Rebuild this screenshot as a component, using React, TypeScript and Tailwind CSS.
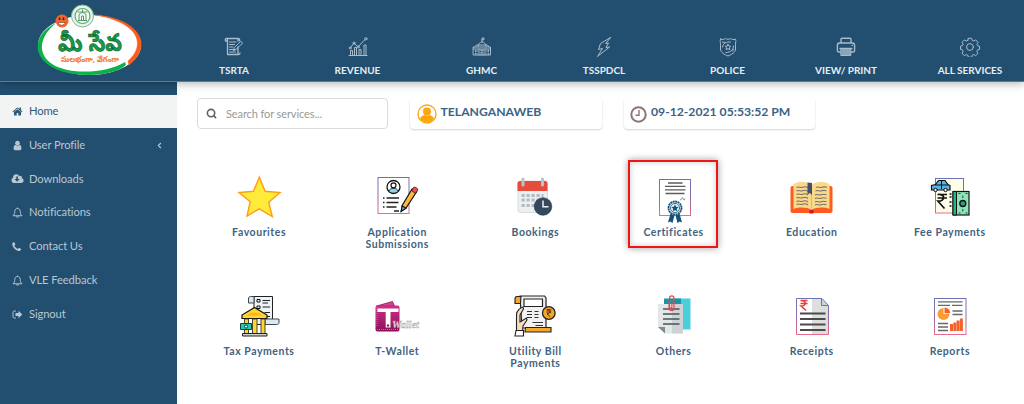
import React from "react";
import { ChevronLeft, Search } from "lucide-react";

type IconProps = { children: React.ReactNode };

/* ---------- header icons (20x20) ---------- */
const NavIcon = ({ children }: IconProps) => (
	<svg
		className="h-5 w-5"
		viewBox="0 0 20 20"
		fill="none"
		stroke="#a9bccb"
		strokeWidth="1"
		strokeLinecap="round"
		strokeLinejoin="round"
	>
		{children}
	</svg>
);

const navItems = [
	{
		label: "TSRTA",
		width: "w-[124px]",
		icon: (
			<NavIcon>
				<path d="M2.500 1.500H14V4M14 10v6.500M14 1.500c1.500 0 1.800 1 1.500 2.200M2.500 1.500C1.200 1.500 1 3 1.500 4H3.500v13.500H14.500c1 0 1.500-.6 1.500-1.500M3.500 4V2" strokeWidth="1.300" />
				<path d="M5.500 5h6.500M5.500 7.500h5M5.500 10h3.500M5.500 12.500h6M5.500 15h6" />
				<path d="M17 4.500l1.700 1.600-7 6.600-2.300.8.7-2.400z" />
			</NavIcon>
		),
	},
	{
		label: "REVENUE",
		width: "w-[123px]",
		icon: (
			<NavIcon>
				<path d="M1 18.500h18M2.500 18.500v-5h2v5M6.500 18.500V10.500h2v8M11 18.500v-6h2v6M16 18.500V8h2v10.500" />
				<path d="M2.700 10.300l3.200-4 4.200 3.500L17 2.500" />
				<circle cx="2.200" cy="11" r="1" />
				<circle cx="6" cy="6" r="1" />
				<circle cx="10.200" cy="10" r="1" />
				<circle cx="17.800" cy="1.800" r="1.200" />
			</NavIcon>
		),
	},
	{
		label: "GHMC",
		width: "w-[125px]",
		icon: (
			<NavIcon>
				<path d="M10 5V1h2v1.800h-2M6 9.500C6 7 8 5 10 5s4 2 4 4.500M1.500 10h17v8h-17zM3 10l1.500-2h11l1.500 2M1.500 12h17M7 12v6M13 12v6" />
				<path d="M3.500 13.500v1M5 13.500v1M3.500 16.200v1M5 16.200v1M15 13.500v1M16.500 13.500v1M15 16.200v1M16.500 16.200v1M9 18v-3h2v3M8.500 13.300h3" />
			</NavIcon>
		),
	},
	{
		label: "TSSPDCL",
		width: "w-[120px]",
		icon: (
			<NavIcon>
				<path d="M16.500.500L6.500 6.500 4.500 12.500l4-1L3.500 19.500l12-9.500-3.500.500L14.500 6l-2.500.500z" />
			</NavIcon>
		),
	},
	{
		label: "POLICE",
		width: "w-[127px]",
		icon: (
			<NavIcon>
				<path d="M2.500 2C4.500 3 6 2.500 7.500 1.500c1.500 1 3.500 1 5 0C14 2.500 15.500 3 17.500 2c.8 2 0 3 0 5.500V12c0 3.500-4 5.500-7.500 7-3.500-1.500-7.500-3.500-7.500-7V7.500c0-2.500-.8-3.500 0-5.500z" />
				<path d="M4.500 10C5 6.500 8 4.500 12.500 5M15.500 9c0 4-3 6.500-7.500 6.500M4.500 5.200h2M14.500 14l1-1.500" />
				<path d="M10 7.300l.9 1.700 1.900.3-1.300 1.400.3 1.900-1.800-.9-1.800.9.300-1.900-1.300-1.400 1.900-.3z" />
			</NavIcon>
		),
	},
	{
		label: "VIEW/ PRINT",
		width: "w-[110px]",
		icon: (
			<NavIcon>
				<path d="M5 6V2.500C5 1.700 5.500 1.300 6.200 1.300h7.600c.7 0 1.200.4 1.200 1.200V6M4.500 15H3c-1 0-1.600-.6-1.600-1.600V8.200C1.400 7 2.200 6 3.500 6h13c1.300 0 2.100 1 2.100 2.200v5.200c0 1-.6 1.600-1.600 1.600h-1.500" strokeWidth="1.400" />
				<path d="M4 11.500h12M16 8.300h.5" strokeWidth="1.300" />
				<path d="M5.200 11.500h9.600v7H5.200z" fill="#8aa5b9" />
			</NavIcon>
		),
	},
	{
		label: "ALL SERVICES",
		width: "w-[138px]",
		icon: (
			<NavIcon>
				<circle cx="10" cy="10" r="3.400" />
				<path d="M8.300 1.300h3.400l.5 2.100 1.500.6 1.900-1.100 2.400 2.400-1.100 1.900.6 1.500 2 .5v3.200l-2 .5-.6 1.500 1.100 1.900-2.400 2.400-1.900-1.100-1.500.6-.5 2H8.300l-.5-2-1.500-.6-1.900 1.100L2 16.300l1.100-1.900-.6-1.500-2-.5V9.200l2-.5.600-1.500L2 5.300l2.400-2.400L6.300 4l1.500-.6z" />
			</NavIcon>
		),
	},
];

/* ---------- sidebar icons ---------- */
const BellIcon = () => (
	<svg className="h-[11px] w-[11px]" viewBox="0 0 22 22" fill="none" stroke="currentColor" strokeWidth="1.900">
		<path d="M11 1v2M2 17.500c3-2.500 3.500-5.500 3.500-8.500 0-4 2.500-6 5.500-6s5.500 2 5.500 6c0 3 .5 6 3.500 8.500zM8.500 18.500c.2 1.500 1.200 2.200 2.500 2.200s2.300-.7 2.500-2.200" />
	</svg>
);

const menuItems = [
	{
		label: "Home",
		icon: (
			<svg className="h-[11px] w-[11px]" viewBox="0 0 1792 1792" fill="currentColor">
				<path d="M1472 992v480q0 26-19 45t-45 19h-384v-384h-256v384h-384q-26 0-45-19t-19-45v-480q0-1 .5-3t.5-3l575-474 575 474q1 2 1 6zm223-69l-62 74q-8 9-21 11h-3q-13 0-21-7l-692-577-692 577q-12 8-24 7-13-2-21-11l-62-74q-8-10-7-23.500t11-21.500l719-599q32-26 76-26t76 26l244 204v-195q0-14 9-23t23-9h192q14 0 23 9t9 23v408l219 182q10 8 11 21.500t-7 23.500z" />
			</svg>
		),
	},
	{
		label: "User Profile",
		icon: (
			<svg className="h-[11px] w-[11px]" viewBox="128 0 1536 1792" fill="currentColor">
				<path d="M1536 1399q0 109-62.500 187t-150.500 78h-854q-88 0-150.500-78t-62.500-187q0-85 8.500-160.500t31.500-152 58.500-131 94-89 134.500-34.500q131 128 313 128t313-128q76 0 134.500 34.500t94 89 58.500 131 31.500 152 8.500 160.500zm-256-887q0 159-112.500 271.500t-271.500 112.500-271.500-112.500-112.500-271.500 112.500-271.500 271.500-112.500 271.500 112.500 112.500 271.500z" />
			</svg>
		),
	},
	{
		label: "Downloads",
		icon: (
			<svg className="h-[12px] w-[13px] shrink-0" viewBox="0 0 2048 1792" fill="currentColor">
				<path d="M1344 928q0-14-9-23t-23-9h-224v-352q0-13-9.500-22.500t-22.500-9.500h-192q-13 0-22.500 9.500t-9.500 22.500v352h-224q-13 0-22.500 9.500t-9.500 22.500q0 14 9 23l352 352q9 9 23 9t23-9l351-351q10-12 10-24zm640 224q0 159-112.500 271.500t-271.500 112.500h-1088q-185 0-316.500-131.500t-131.500-316.500q0-130 70-240t188-165q-2-30-2-43 0-212 150-362t362-150q156 0 285.500 87t188.500 231q71-62 166-62 106 0 181 75t75 181q0 76-41 138 130 31 213.500 135.500t83.500 238.500z" />
			</svg>
		),
	},
	{ label: "Notifications", icon: <BellIcon /> },
	{
		label: "Contact Us",
		icon: (
			<svg className="h-[10px] w-[10px]" viewBox="200 100 1500 1600" fill="currentColor">
				<path d="M1600 1240q0 27-10 70.500t-21 68.500q-21 50-122 106-94 51-186 51-27 0-53-3.500t-57.500-12.500-47-14.500-55.500-20.500-49-18q-98-35-175-83-127-79-264-216t-216-264q-48-77-83-175-3-9-18-49t-20.500-55.500-14.500-47-12.500-57.500-3.500-53q0-92 51-186 56-101 106-122 25-11 68.500-21t70.500-10q14 0 21 3 18 6 53 76 11 19 30 54t35 63.500 31 53.500q3 4 17.500 25t21.500 35.500 7 28.500q0 20-28.500 50t-62 55-62 53-28.500 46q0 9 5 22.500t8.500 20.500 14 24 11.500 19q76 137 174 235t235 174q2 1 19 11.500t24 14 20.500 8.500 22.500 5q18 0 46-28.500t53-62 55-62 50-28.500q14 0 28.500 7t35.500 21.500 25 17.500q25 15 53.500 31t63.500 35 54 30q70 35 76 53 3 7 3 21z" />
			</svg>
		),
	},
	{ label: "VLE Feedback", icon: <BellIcon /> },
	{
		label: "Signout",
		icon: (
			<svg className="h-[11px] w-[11px]" viewBox="0 0 22 22">
				<path d="M8 4H4.500C3 4 2 5 2 6.500v9C2 17 3 18 4.500 18H8" fill="none" stroke="currentColor" strokeWidth="1.900" />
				<path d="M13 3.500L20.500 11 13 18.500V14H7V8h6z" fill="currentColor" />
			</svg>
		),
	},
];

/* ---------- service tiles (48x48) ---------- */
const TileIcon = ({ children }: IconProps) => (
	<svg className="h-12 w-12 overflow-visible" viewBox="0 0 48 48" fill="none">
		{children}
	</svg>
);

const Gradient = () => (
	<svg className="absolute h-0 w-0">
		<defs>
			<linearGradient id="frame" x1="0" y1="0" x2="0" y2="1">
				<stop offset="0" stopColor="#6b74b0" />
				<stop offset="0.5" stopColor="#8e6ba5" />
				<stop offset="1" stopColor="#e96a8d" />
			</linearGradient>
			<linearGradient id="wallet" x1="0" y1="0" x2="0" y2="1">
				<stop offset="0" stopColor="#cf2f8c" />
				<stop offset="1" stopColor="#8e0f58" />
			</linearGradient>
		</defs>
	</svg>
);

const services = [
	{
		label: "Favourites",
		icon: (
			<TileIcon>
				<path d="M24.300 4l5.800 14.300 15 1.200-11.400 9.700 3.600 14.300-13-7.700-12.300 7.200 3.200-14.300L4 19.500l14.500-1.200z" fill="#ffeb3b" stroke="#ff9d12" strokeWidth="1.400" />
			</TileIcon>
		),
	},
	{
		label: "Application Submissions",
		icon: (
			<TileIcon>
				<rect x="5" y="4.500" width="31" height="36" fill="#fff" stroke="url(#frame)" />
				<circle cx="20.500" cy="14" r="6.500" fill="#fff" stroke="#111" strokeWidth="1.300" />
				<path d="M15.800 18.300c.5-4 9-4 9.400 0-2.500 2.400-7 2.400-9.400 0z" fill="#8fd3ea" stroke="#111" strokeWidth=".8" />
				<circle cx="20.500" cy="12.300" r="2.500" fill="#fff" stroke="#111" strokeWidth="1.200" />
				<path d="M10 25h1.500M10 29.500h1.500M10 34h1.500M13.500 25h12.500M13.500 29.500h12M13.500 34h10M21 38h5" stroke="#222" strokeWidth="1.500" />
				<path d="M39 16l4.500 3-10.500 16-4.800 3 1-5.500z" fill="#fbb83c" stroke="#111" strokeWidth="1.200" />
				<path d="M38.500 17.500l2-3c1.200-1.200 5 1.200 4.200 2.700l-2.200 3.300z" fill="#ee4b52" stroke="#111" strokeWidth=".8" />
				<path d="M29.200 33l3.800 2-4.800 3.500z" fill="#78b8e8" stroke="#111" strokeWidth="1.100" />
			</TileIcon>
		),
	},
	{
		label: "Bookings",
		icon: (
			<TileIcon>
				<rect x="7" y="8" width="29.500" height="31.500" rx="2.500" fill="#ecf0f1" stroke="#cfd6da" strokeWidth=".8" />
				<path d="M6.500 18V10.500c0-1.500 1-2.500 2.500-2.500h25c1.500 0 2.500 1 2.500 2.500V18z" fill="#e64c3c" />
				<path d="M12 6v6M31.500 6v6" stroke="#b9c3c7" strokeWidth="3" strokeLinecap="round" />
				<path d="M10.500 22.500h22M10.500 27h22M10.500 32.500h16" stroke="#b2bbc1" strokeWidth="3" strokeDasharray="3.200 1.800" />
				<circle cx="32" cy="33.500" r="8.800" fill="#34495e" stroke="#24384b" strokeWidth=".6" />
				<path d="M32 27.500v6.300h5.500" stroke="#ecf0f1" strokeWidth="1.500" />
			</TileIcon>
		),
	},
	{
		label: "Certificates",
		selected: true,
		icon: (
			<TileIcon>
				<rect x="9.500" y="6.500" width="31" height="36" fill="#fff" stroke="url(#frame)" />
				<path d="M18 10h14.500M15 13.300h20.500M15 16.800h20.500M15.500 20.500h19" stroke="#5c5c5c" strokeWidth="1.300" />
				<path d="M30 27c2 0 1.500-2.500 2.500-2.500s.2 2.500 1.500 2.500 0-1.500 1.200-1.200" stroke="#777" strokeWidth=".8" />
				<path d="M20.500 40.500l-2.500 9 2.600-1 1.800 1.700 2-7.500zM29.500 40.500l2.500 9-2.600-1-1.800 1.700-2-7.500z" fill="#12517a" />
				<circle cx="25" cy="35" r="6.500" fill="#fff" stroke="#12517a" strokeWidth="1.800" strokeDasharray="2 .5" />
				<circle cx="25" cy="35" r="4.600" fill="#e6f1f6" stroke="#12517a" strokeWidth=".8" />
				<path d="M25 31.300l1.100 2.400 2.600.3-1.900 1.800.5 2.600-2.300-1.300-2.300 1.300.5-2.600-1.900-1.800 2.600-.3z" fill="#12517a" />
			</TileIcon>
		),
	},
	{
		label: "Education",
		icon: (
			<TileIcon>
				<path d="M4.500 13h38c1.200 0 2 .8 2 2v23c0 1.200-.8 2-2 2h-38c-1.200 0-2-.8-2-2V15c0-1.200.8-2 2-2z" fill="#ff5a1f" />
				<path d="M21.500 37h4v3.500h-4z" fill="#d3122d" />
				<path d="M5.500 11c6-3 13-3 18 1 5-4 12-4 18-1v25c-6-2-13-2-18 1-5-3-12-3-18-1z" fill="#fbd98a" />
				<path d="M23.500 12v25" stroke="#e8b65a" />
				<path d="M8.500 14.500c2-1.500 4 .7 6-.2s4-.6 5.500.7M8.500 18c2-1.500 4 .7 6-.2s4-.6 5.500.7M8.500 21.500c2-1.500 4 .7 6-.2s4-.6 5.500.7M8.500 25c2-1.500 4 .7 6-.2s4-.6 5.500.7M8.500 28.500c2-1.500 4 .7 6-.2s4-.6 5.500.7M8.500 31.500c2-1.500 4 .7 6-.2s4-.6 5.500.7M28 14.500c2-1.500 4 .7 6-.2s3-.6 5 0M27.500 18c2-1.500 4 .7 6-.2s3-.6 5 0M27 22c2-1.500 4 .7 6-.2s4-.6 5.500 0M27 25.500c2-1.500 4 .7 6-.2s4-.6 5.500 0M27 29c2-1.500 4 .7 6-.2s4-.6 5.500 0M27 32c2-1.500 4 .7 6-.2s4-.6 5.500 0" stroke="#78736f" strokeWidth="1.100" />
				<path d="M19.500 9.500l4.500.500v12l-2.200-2-2.300 1.500z" fill="#44506b" />
			</TileIcon>
		),
	},
	{
		label: "Fee Payments",
		icon: (
			<TileIcon>
				<rect x="9.500" y="5.500" width="28" height="34.500" fill="#fffde9" stroke="url(#frame)" />
				<path d="M5.500 17v-4.500l4-1L12.500 7.500h6.500l3 4 2 1V17z" fill="#57b5e6" stroke="#111" strokeWidth="1.200" />
				<path d="M9 12h13M15.500 8v8" stroke="#111" />
				<circle cx="9.500" cy="17" r="1.700" fill="#eee" stroke="#111" />
				<circle cx="19.500" cy="17" r="1.700" fill="#eee" stroke="#111" />
				<path d="M11.500 21.500h9.500M11.500 25h9.500M12 21.500c7.500-1 7.500 7 0 6.700l6.500 7.300" stroke="#111" strokeWidth="1.700" />
				<path d="M23.500 21h2M23.500 24h2M23.500 29h2M23.500 33h2" stroke="#111" strokeWidth="1.600" />
				<rect x="27" y="18.500" width="16" height="23.500" fill="#8fe3b8" stroke="#111" strokeWidth="1.200" />
				<path d="M27 18.500h3.500V42H27z" fill="#20b884" stroke="#111" />
				<circle cx="36.800" cy="30.500" r="3" fill="#21a37a" stroke="#111" strokeWidth="1.300" />
				<path d="M36.800 22.500v2.500M36.800 36v2.500M32.500 20.500h2M39.500 20.500h2M32.500 40h2M39.500 40h2" stroke="#1b4b3a" />
			</TileIcon>
		),
	},
	{
		label: "Tax Payments",
		icon: (
			<TileIcon>
				<path d="M19 4.500h18.500V27l-3 5.500H19z" fill="#edf3f7" stroke="#222" />
				<path d="M19 4.500h-3.500c-1.500 0-2 1-2 2.500v4h5.500zM37.500 27h6.500v3.500c0 1.500-1 2-2.500 2H30V27z" fill="#dce9f3" stroke="#444" />
				<path d="M22 7.500h3v2.500h-3zM22 14h3v2.500h-3z" stroke="#111" />
				<path d="M27.500 8.500H35M27.500 11H33M27.500 15H35M29.500 20.500H35M31.500 24.500H35" stroke="#222" strokeWidth="1.200" />
				<path d="M7 26.500v-3.500L19.500 15.500 32 23v3.500z" fill="#ffd433" stroke="#111" strokeWidth="1.200" />
				<path d="M12 23.500c3-4 11-4 15 0z" fill="#f3b917" />
				<path d="M9.500 27h4v15h-4zM17.500 27h4.500v15h-4.500zM26 27h4v15h-4z" fill="#ffd433" stroke="#333" strokeWidth=".9" />
				<path d="M7.500 41.500h24.500V44H7.500z" fill="#c8d2da" stroke="#222" />
				<path d="M5.500 31.500h11v6h-11z" fill="#27c7ad" stroke="#144" />
				<circle cx="11" cy="34.500" r="1.600" fill="#dff" stroke="#144" />
			</TileIcon>
		),
	},
	{
		label: "T-Wallet",
		icon: (
			<TileIcon>
				<path d="M3.500 14l16-4.500 2 4.500z" fill="#d83f90" stroke="#8a1555" strokeWidth=".8" />
				<rect x="2.500" y="13.500" width="24" height="26" rx="2" fill="url(#wallet)" />
				<path d="M4 37.500h21M4 15v20" stroke="#e98abb" strokeWidth=".7" strokeDasharray="1 1" />
				<path d="M4.500 16.500h21V20h-8v15.500h-4.800V20H4.500z" fill="#fff" />
				<circle cx="15" cy="33.500" r="1.200" fill="#9c1763" />
				<text x="19" y="35.500" fontFamily="Liberation Serif, serif" fontSize="11" fontStyle="italic" fontWeight="700" textLength="27" lengthAdjust="spacingAndGlyphs" fill="#f4eef2" stroke="#9b9b9b" strokeWidth=".4">
					Wallet
				</text>
			</TileIcon>
		),
	},
	{
		label: "Utility Bill Payments",
		icon: (
			<TileIcon>
				<path d="M9 4h24.500l1.500 2v30H11z" fill="#f1f1f4" stroke="#222" strokeWidth="1.200" />
				<path d="M10 4.500H6c-1.500 0-2 1-2 2.500v4.500h5.500z" fill="#f6a62a" stroke="#222" strokeWidth="1.100" />
				<path d="M13 7h18.500v7.500H13z" fill="#fff" stroke="#222" strokeWidth="1.200" />
				<path d="M16 19.500h5M16 22.500h5M16 25.500h5M23.500 19.500h4M23.500 22.500h4M23.500 25.500h4M21.500 30.500h10.500M24.500 33.500h7.500" stroke="#333" strokeWidth="1.200" />
				<path d="M14.500 35.500h25.500v4.500h-26z" fill="#f6a62a" stroke="#222" strokeWidth="1.100" />
				<circle cx="37.800" cy="21" r="6.300" fill="#f6a62a" stroke="#222" strokeWidth="1.300" />
				<path d="M35.500 17.800h4.800M35.500 20h4.800M36 17.800c4.500 0 4 4 0 4l3.300 3" stroke="#222" strokeWidth=".9" />
				<path d="M5.500 39V22.500c0-4 4.500-7 6.500-7.500l.5 2-3.500 6v7l6.500-4 .5 2-4 6-.5 6z" fill="#f9dcc0" stroke="#222" strokeWidth="1.100" />
				<path d="M5 38.500h7.500V44H4z" fill="#fff" stroke="#222" strokeWidth="1.100" />
			</TileIcon>
		),
	},
	{
		label: "Others",
		icon: (
			<TileIcon>
				<path d="M20 6.500h20.500v31H20z" fill="#48cfd9" />
				<path d="M14 6.500h17v6H14z" fill="#1796ab" />
				<path d="M8 12h25v29.500H15L8 35z" fill="#e3e7e8" />
				<path d="M22 12h11v29.500H22z" fill="#cdd3d5" />
				<path d="M8 35h7v6.500z" fill="#7f8b8f" />
				<path d="M13 17h16.500M13 22h16.500M13 27h16.500M13 32h16.500" stroke="#43545e" strokeWidth="1.300" />
				<path d="M19 8v8.500c0 3 5 3 5 0V6.500c0-3.500-4.500-3.500-4.500 0V15c0 1.500 2.300 1.500 2.300 0V8" stroke="#ef4343" strokeWidth="1.100" />
			</TileIcon>
		),
	},
	{
		label: "Receipts",
		icon: (
			<TileIcon>
				<path d="M8.500 6.500H34l6.500 7v29h-32z" fill="#fff" />
				<path d="M24 7h10l6 6.500v28.500H24z" fill="#dedede" />
				<path d="M33.500 6.500l7 7h-7z" fill="#c8d4e0" />
				<path d="M8.500 6.500H34l6.500 7v29h-32zM33.500 6.500v7h7" stroke="url(#frame)" />
				<path d="M12.500 8.500h7M12.500 11.500h7M13 8.500c6 0 5.500 5.500 0 5.500l5 4.500" stroke="#ef3a35" strokeWidth="1.500" />
				<path d="M12 21.500h25.500M12 27h25.500M12 32.500h25.500M12 38h25.500" stroke="#4b4b4b" strokeWidth="1.800" />
			</TileIcon>
		),
	},
	{
		label: "Reports",
		icon: (
			<TileIcon>
				<rect x="8.500" y="6.500" width="31.500" height="36" fill="#fff" stroke="url(#frame)" />
				<path d="M12 9.800h24.500M12 13.300h12M26 13.300h10.500M26.500 19h10M26.500 22.500h10M12 31.500h10M12 35h10M12 38.500h10" stroke="#686868" strokeWidth="1.300" />
				<path d="M17.500 16v6h6a6 6 0 1 1-6-6z" fill="#fb9d34" />
				<path d="M18.500 15.500a5.700 5.700 0 0 1 5.700 5.700h-5.700z" fill="#f4632e" />
				<path d="M24 32h3v7h-3zM27.300 30.500h3V39h-3zM30.600 28.500h3V39h-3zM33.900 26.500h3V39h-3z" fill="#f4632e" />
			</TileIcon>
		),
	},
];

const Logo = () => (
	<svg className="h-[76px] w-[110px]" viewBox="34 2 110 76">
		<ellipse cx="89.500" cy="45" rx="51.500" ry="30" fill="#fff" />
		<path d="M56 23C27 37 32 68 74 74c22 3 43-1 52-9l-1-3c-13 8-33 11-51 9C39 67 32 43 56 23z" fill="#0db14b" />
		<path d="M95 15c42 3 60 29 34 50l-1-4c19-17 10-39-33-46z" fill="#ff5a1a" stroke="#ff5a1a" strokeWidth=".5" />
		<circle cx="62" cy="21" r="6.500" fill="#f4652c" />
		<path d="M59.500 17.500v2.500M63.500 17.500v2.500" stroke="#1d2733" strokeWidth="1.500" />
		<path d="M58.500 22.500h6.500c-.3 3.500-6 3.500-6.500 0z" fill="#fff" stroke="#50291b" strokeWidth=".5" />
		<circle cx="82.500" cy="16" r="11" fill="#e8f2e9" stroke="#7fb98d" />
		<circle cx="82.500" cy="16" r="7.500" fill="#f5faf5" stroke="#5da877" strokeWidth="1.200" />
		<path d="M79 20v-5c0-3 7-3 7 0v5M81.500 20v-4h2v4M78 20.500h9M77.500 12h10M82.500 9.500v3" stroke="#4f9f6b" fill="none" />
		<text x="90" y="50.500" textAnchor="middle" fontFamily="Noto Sans Telugu, Noto Sans, sans-serif" fontWeight="700" fontSize="24" textLength="64" lengthAdjust="spacingAndGlyphs" fill="#169b48" stroke="#0c6a33" strokeWidth=".7">
			మీ సేవ
		</text>
		<text x="90" y="61.500" textAnchor="middle" fontFamily="Noto Sans Telugu, Noto Sans, sans-serif" fontWeight="700" fontSize="7.500" textLength="58" lengthAdjust="spacingAndGlyphs" fill="#f47b30" stroke="#f47b30" strokeWidth=".2">
			సులభంగా, వేగంగా
		</text>
	</svg>
);

export default function App() {
	return (
		<div className="flex h-[404px] w-[1024px] flex-col overflow-hidden bg-white font-[Lato,sans-serif]">
			<Gradient />
			<header className="relative z-10 flex h-[82px] shrink-0 overflow-visible border-b border-[#5d7b94] bg-[#224e70] shadow-[0_2px_8px_rgba(0,0,0,0.28)]">
				<div className="w-[172px] shrink-0 pt-0.5 pl-[34px]">
					<Logo />
				</div>
				<nav className="flex min-w-0 flex-1 overflow-hidden">
					{navItems.map((item) => (
						<a
							key={item.label}
							className={`flex shrink-0 flex-col items-center pt-[37px] ${item.width}`}
						>
							{item.icon}
							<span className="mt-[7px] text-[10px] leading-3 font-bold whitespace-nowrap text-[#e6edf2]">
								{item.label}
							</span>
						</a>
					))}
				</nav>
			</header>

			<div className="flex flex-1">
				<aside className="w-[176.500px] shrink-0 bg-[#224e70] pt-[12.500px]">
					<ul>
						{menuItems.map((item, idx) => (
							<li
								key={item.label}
								className={`flex h-[33.800px] items-center pr-[13px] pl-[11px] text-[11.200px] tracking-[-0.100px] ${
									idx === 0
										? "bg-[#f2f4f4] text-[#2f5878]"
										: "text-[#b9c7d2]"
								}`}
							>
								<span className="mr-1.5 flex w-3 justify-center">
									{item.icon}
								</span>
								<span className="flex-1">{item.label}</span>
								{item.label === "User Profile" && (
									<ChevronLeft size={9} strokeWidth={3} />
								)}
							</li>
						))}
					</ul>
				</aside>

				<main className="flex-1 pt-4">
					<div className="flex pl-[20.500px]">
						<div className="flex h-[31px] w-[191px] items-center rounded border border-[#d9dbdd] pl-2 text-[11px] tracking-[-0.100px] text-[#989a94]">
							<Search size={11} strokeWidth={3.500} className="mr-[9px] text-[#62625f]" />
							<span className="pt-px">Search for services...</span>
						</div>
						<div className="ml-[22px] flex h-[31px] w-[192px] items-center rounded pl-[6.500px] text-[12.200px] font-bold text-[#3a6485] shadow-[0_1px_2px_rgba(0,0,0,0.18)]">
							<svg className="mr-1 h-5 w-5" viewBox="0 0 20 20">
								<circle cx="10" cy="10" r="9" fill="#fff" stroke="#fba50f" strokeWidth="1.300" />
								<circle cx="10" cy="7.500" r="4" fill="#fba50f" />
								<path d="M3 15c1-3 3-4 4.500-4 1.500 1 3.500 1 5 0 1.500 0 3.500 1 4.500 4-3.500 4.500-10.500 4.500-14 0z" fill="#fba50f" />
							</svg>
							<span className="-mt-0.5">TELANGANAWEB</span>
						</div>
						<div className="ml-[22px] flex h-[31px] w-[191px] items-center rounded pl-[6px] text-[12.200px] font-bold text-[#3a6485] shadow-[0_1px_2px_rgba(0,0,0,0.18)]">
							<svg className="mt-0.5 mr-1 h-[17px] w-[17px]" viewBox="0 0 17 17" fill="none" stroke="#8b7478">
								<circle cx="8.500" cy="8.500" r="7.200" strokeWidth="2" />
								<path d="M9 4v5.200H5.500" strokeWidth="1.400" />
							</svg>
							<span className="-mt-0.5">09-12-2021 05:53:52 PM</span>
						</div>
					</div>

					<div className="mt-[44px] ml-[13.500px] grid w-[829px] grid-cols-6">
						{services.map((service) => (
							<div
								key={service.label}
								className="relative flex h-[119px] flex-col items-center"
							>
								{service.selected && (
									<div className="absolute -top-[13px] left-[23.500px] h-[88px] w-[90px] border-2 border-[#f01418] shadow-[0_0_7px_rgba(0,0,0,0.4),inset_0_0_6px_rgba(0,0,0,0.2)]" />
								)}
								{service.icon}
								<p className="mt-[6px] w-[80px] text-center text-[10.500px] leading-[11.500px] font-bold tracking-[0.550px] text-[#3f6380]">
									{service.label}
								</p>
							</div>
						))}
					</div>
				</main>
			</div>
		</div>
	);
}
